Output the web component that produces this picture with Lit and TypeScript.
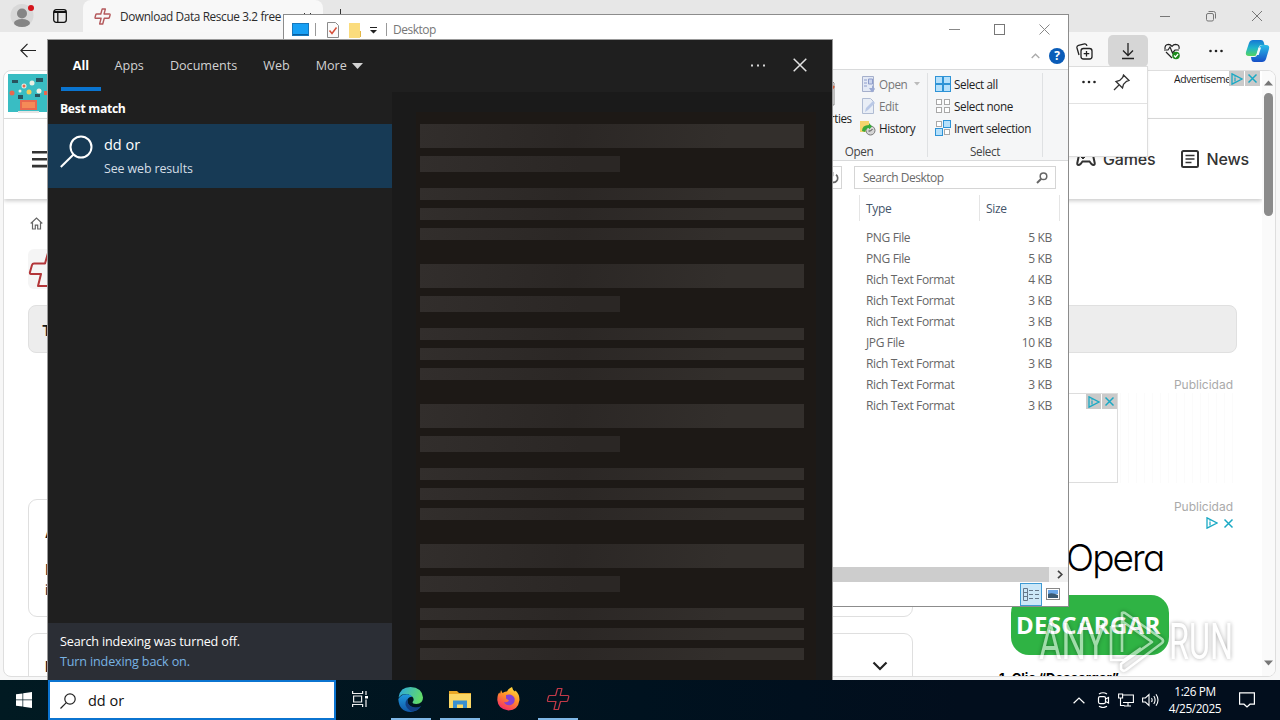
import { LitElement, html, css, svg } from "lit";
import { customElement } from "lit/decorators.js";

const rescueCross = svg`<path d="M11.500 1.500H16l-1.800 7h7.500q1.300 0 1 1.300l-1 3.700q-.3 1-1.300 1h-5.900l-2.200 8H8l2-8H2.500q-1.300 0-1-1.300l1-3.700q.3-1 1.300-1h5.800z" fill="none" stroke-linejoin="round"/>`;
const adChoices = html`<svg width="12" height="12" viewBox="0 0 12 12" fill="none" stroke="#1aa9c4" stroke-width="1.300"><path d="M1 .8v10.400L11 6z"/><path d="M4 4.500v4M4 3v.8" stroke-width="1.200"/></svg>`;
const adClose = html`<svg width="11" height="11" viewBox="0 0 11 11" stroke="#1aa9c4" stroke-width="1.500"><path d="M1.500 1.500l8 8M9.500 1.500l-8 8"/></svg>`;

@customElement("edge-window")
class EdgeWindow extends LitElement {
  static styles = css`
    :host { display: flex; flex-direction: column; width: 1280px; height: 680px; background: #f7f7f7; box-sizing: border-box; font-family: "Open Sans", "Noto Sans", sans-serif; color: #1b1b1b; }
    * { box-sizing: border-box; }
    svg { display: block; flex: none; }
    .tabs { display: flex; height: 32px; background: #e7e7e7; padding-left: 10px; flex: none; }
    .avatar { margin-top: 3px; }
    .spaces { margin: 9px 0 0 18px; }
    .tab { display: flex; align-items: center; width: 240px; height: 32px; margin-left: 16px; padding-left: 11px; background: #f8f8f8; border-radius: 8px 8px 0 0; font-size: 11.800px; white-space: nowrap; }
    .tab-title { margin-left: 9px; width: 183px; color: #2b2b2b; letter-spacing: -.37px; }
    .plus { margin: 9px 0 0 12px; }
    .controls { display: flex; margin: 10px 17px 0 auto; gap: 34px; }
    .toolbar { display: flex; height: 38px; align-items: center; padding: 0 10px 0 20px; flex: none; }
    .actions { display: flex; margin-left: auto; align-items: center; height: 38px; }
    .down { width: 40px; height: 32px; background: #d6d6d6; border-radius: 5px; display: grid; place-items: center; margin: 0 15px 0 15px; }
    .dots { margin: 0 22px 0 28px; }
    .frame { display: flex; width: 1273px; height: 607px; margin-left: 3px; background: #fff; border: 1px solid #dedede; border-radius: 8px; overflow: hidden; }
    .page { width: 1258px; height: 606px; flex: none; overflow: hidden; }
    .scroll { flex: 1; background: #fafafa; display: flex; flex-direction: column; align-items: center; padding: 9px 0 10px; }
    .thumb { width: 9px; height: 123px; background: #8b8b8b; border-radius: 5px; margin: 7px 0 auto; }
    .banner { height: 48px; border-bottom: 1px solid #dcdcdc; display: flex; justify-content: space-between; padding: 2px 2px 0 4px; }
    .sponsor { display: flex; font: 10.400px/13px "Open Sans", sans-serif; letter-spacing: -.38px; }
    .sponsor-text { width: 55px; overflow: hidden; white-space: nowrap; }
    .badges { display: flex; gap: 1px; }
    .badge { width: 15px; height: 15px; background: #cacaca; display: grid; place-items: center; }
    .sponsor .badges { margin-top: -2px; }
    .header { height: 80px; display: flex; align-items: center; padding: 0 13px 0 28px; box-shadow: 0 2px 4px #0003; color: #333; font: 500 16px Inter, sans-serif; letter-spacing: -.15px; }
    .menu { display: flex; align-items: center; margin-left: auto; gap: 7px; }
    .menu .news { margin-left: 19px; }
    .crumbs { padding: 18px 0 0 26px; }
    .product { width: 40px; height: 40px; background: #f5f5f5; border-radius: 6px; margin: 19px 0 0 24px; }
    .headline { width: 1209px; height: 48px; border: 1px solid #e0e0e0; border-radius: 8px; background: #ededed; margin: 16px 0 0 24px; padding: 15px 13px; font: 700 15px/20px Inter, sans-serif; }
    .columns { display: flex; justify-content: space-between; padding: 24px 29px 0 24px; }
    .articles { width: 885px; padding-top: 122px; display: flex; flex-direction: column; gap: 16px; }
    .card { height: 118px; border: 1px solid #dfdfdf; border-radius: 9px; padding: 23px 16px; font: 14px/20px Inter, sans-serif; }
    .card-title { font-weight: 700; line-height: 20px; margin-bottom: 17px; }
    .card.closed { display: flex; justify-content: space-between; padding-right: 24px; }
    .card.closed .chev { margin-top: 4px; }
    .side { display: flex; flex-direction: column; align-items: flex-end; width: 224px; }
    .label { font: 12px/16px Inter, sans-serif; color: #aaa; height: 16px; }
    .slot { width: 224px; height: 90px; display: flex; background: repeating-linear-gradient(90deg, #fff 0 7px, #fbfbfb 7px 8px); }
    .slot-ad { width: 109px; height: 90px; background: #fff; border: 1px solid #ddd; display: flex; justify-content: flex-end; }
    .label.second { margin-top: 16px; }
    .adrow { display: flex; gap: 5px; margin: 2px -1px 0 0; align-items: center; height: 12px; }
    .brand { align-self: flex-start; margin: 4px 0 0 57px; font: 300 37px/50px Inter, sans-serif; font-feature-settings: "cv11"; letter-spacing: -1.900px; color: #000; }
    .cta { align-self: flex-start; width: 158px; height: 60px; border-radius: 18px; background: #2fb344; color: #fff; font: 700 24px/60px "Open Sans", sans-serif; letter-spacing: .3px; padding-left: 5px; margin: 12px 0 0 2px; }
    .step { align-self: flex-start; margin: 13px 0 0 -10px; font: 700 13px/20px Inter, sans-serif; white-space: nowrap; color: #000; }
    .flyout { position: absolute; left: 900px; top: 66px; width: 248px; height: 91px; background: #fff; border: 1px solid #ddd; box-shadow: 0 2px 3px #0001; }
    .fly-head { height: 37px; border-bottom: 1px solid #e2e2e2; display: flex; align-items: center; justify-content: flex-end; gap: 17px; padding: 0 17px 6px; }
  `;
  render() {
    const ellipsis = html`<svg width="14" height="4" viewBox="0 0 14 4" fill="#222"><circle cx="1.500" cy="2" r="1.300"/><circle cx="7" cy="2" r="1.300"/><circle cx="12.500" cy="2" r="1.300"/></svg>`;
    return html`
      <div class="tabs">
        <svg class="avatar" width="25" height="25" viewBox="0 0 25 25"><circle cx="12" cy="12.500" r="11.500" fill="#d8d8d8"/><circle cx="12" cy="10.500" r="5" fill="#858585"/><ellipse cx="12" cy="20" rx="8" ry="4" fill="#858585"/><circle cx="21" cy="5" r="3" fill="#d5141c"/></svg>
        <svg class="spaces" width="14" height="14" viewBox="0 0 14 14" fill="none" stroke="#111" stroke-width="1.300"><rect x=".7" y=".7" width="12.600" height="12.600" rx="2.500"/><path d="M1 3h12" stroke-width="2"/><path d="M4.800 4v9"/></svg>
        <div class="tab">
          <svg width="17" height="17" viewBox="0 0 24 24" stroke="#b4595c" stroke-width="2">${rescueCross}</svg>
          <div class="tab-title">Download Data Rescue 3.2 free</div>
          <svg width="9" height="9" viewBox="0 0 9 9" stroke="#333"><path d="M1 1l7 7M8 1L1 8"/></svg>
        </div>
        <svg class="plus" width="12" height="12" viewBox="0 0 12 12" stroke="#333"><path d="M5.500 0v11M0 5.500h11"/></svg>
        <div class="controls">
          <svg width="12" height="12" viewBox="0 0 12 12" stroke="#777"><path d="M1 6.500h10"/></svg>
          <svg width="12" height="12" viewBox="0 0 12 12" stroke="#777" fill="none"><rect x="1.500" y="3.500" width="7" height="7.500" rx="1.500"/><path d="M3.500 1.500h5q2 0 2 2v5"/></svg>
          <svg width="12" height="12" viewBox="0 0 12 12" stroke="#777"><path d="M1 1l10 10M11 1L1 11"/></svg>
        </div>
      </div>
      <div class="toolbar">
        <svg width="17" height="16" viewBox="0 0 17 16" stroke="#222" stroke-width="1.200" fill="none"><path d="M16 7.500H1M7.500 .8L.9 7.500l6.600 6.700"/></svg>
        <div class="actions">
          <svg width="17" height="17" viewBox="0 0 17 17" stroke="#222" stroke-width="1.300" fill="none"><path d="M3 12L1 5q-.5-2 1.500-2.600l6-1.500q2-.4 2.500 2"/><rect x="5" y="5.500" width="11" height="10.500" rx="2.500"/><path d="M10.500 8v5.500M7.700 10.700h5.600"/></svg>
          <div class="down"><svg width="14" height="18" viewBox="0 0 14 18" stroke="#222" stroke-width="1.300" fill="none"><path d="M7 1v12M2 8.500l5 5 5-5M1 16.500h12"/></svg></div>
          <svg width="18" height="17" viewBox="0 0 18 17" stroke="#222" stroke-width="1.200" fill="none"><path d="M2 6q-.5-4.500 3.500-4.700 2 0 3.500 2 1.500-2 3.500-2Q17 1.500 16 6M3 9l6 6M1 7h4l2-3 2.500 6L12 7h4"/><circle cx="13" cy="12.500" r="3.800" fill="#1d8a1d" stroke="none"/><path d="M11 12.500l1.500 1.500 2.600-3" stroke="#fff"/></svg>
          <div class="dots">${ellipsis}</div>
          <svg width="25" height="24" viewBox="0 0 25 24"><defs><linearGradient id="cpA" x1="0" y1="0" x2="0" y2="1"><stop offset="0" stop-color="#1577d5"/><stop offset=".5" stop-color="#20b5cb"/><stop offset="1" stop-color="#55d45e"/></linearGradient><linearGradient id="cpB" x1="0" y1="0" x2="0" y2="1"><stop offset="0" stop-color="#29bde8"/><stop offset="1" stop-color="#164fc7"/></linearGradient></defs><path d="M8 1h8q2 0 2.700 2l.8 3h-3q-2 0-2.600 2l-2 7q-.6 2-2.600 2H4q-4 0-3-4L4 4q1-3 4-3z" fill="url(#cpA)"/><path d="M18 6h3q4 0 3 4l-3 10q-1 3-4 3H9q-2 0-2.500-2L6 18h3.500q2 0 2.600-2l2.300-8Q15 6 18 6z" fill="url(#cpB)"/><path d="M13.500 8.500h2.500l-2.300 7.500h-2.500z" fill="#f4f8fb"/></svg>
        </div>
      </div>
      <div class="frame">
        <div class="page">
          <div class="banner">
            <svg width="60" height="41" viewBox="0 0 60 41"><rect y="1" width="60" height="38" fill="#39bdc3"/><g transform="translate(0 1)"><g fill="#28545f"><path d="M4 6h6v3H4zM28 4h7v4h-7zM10 21h5v4h-5zM27 20h5v3h-5z"/></g><g fill="#e9efe4"><circle cx="16" cy="12" r="2.500"/><circle cx="24" cy="9" r="2.500"/><circle cx="31" cy="17" r="2.500"/><circle cx="12" cy="17" r="1.500"/></g><g fill="#e8674f"><circle cx="4" cy="19" r="2.500"/><circle cx="16" cy="12" r="1.500"/><path d="M12 26h17v10H12z"/><path d="M36 17h4v4h-4z"/></g><circle cx="21" cy="18" r="2.500" fill="#f0ce5c"/><path d="M14 28h13v6H14z" fill="#f58a57"/><path d="M10 37h21v2H10z" fill="#e4e4e4"/></g></svg>
            <div class="sponsor"><div class="sponsor-text">Advertisement</div><div class="badges"><span class="badge">${adChoices}</span><span class="badge">${adClose}</span></div></div>
          </div>
          <div class="header">
            <svg width="24" height="18" viewBox="0 0 24 18" fill="#333"><path d="M0 1h24v2.600H0zM0 8h24v2.600H0zM0 14.800h24v2.600H0z"/></svg>
            <div class="menu">
              <svg width="20" height="16" viewBox="0 0 20 16" fill="none" stroke="#333" stroke-width="2"><path d="M5 2h10q1.500 0 2 2l1.700 8q.3 2-1.200 2-1 0-2-1l-2-2.500h-7L4.500 13q-1 1-2 1Q1 14 1.300 12L3 4q.5-2 2-2zM7 4v4M5 6h4"/></svg>
              <span>Games</span>
              <svg class="news" width="18" height="18" viewBox="0 0 18 18" fill="none" stroke="#333" stroke-width="2"><rect x="1" y="1" width="16" height="16" rx="1.500"/><path d="M4.500 5.500h9M4.500 9h9M4.500 12.500h6" stroke-width="1.700"/></svg>
              <span>News</span>
            </div>
          </div>
          <div class="crumbs"><svg width="13" height="13" viewBox="0 0 13 13" fill="none" stroke="#666" stroke-width="1.200"><path d="M.7 6.500L6.500 1l5.800 5.500M2.500 5.500v6.500h2.800V8.200h2.400V12h2.800V5.500"/></svg></div>
          <div class="product"><svg width="40" height="40" viewBox="0 0 40 40" stroke="#b23538" stroke-width="2" fill="none" stroke-linejoin="round"><path d="M20 4h9l-3 11h12l-4 10h-9l-4 12H10l3-12H3q-1.500 0-1-2l2-7q.5-1.500 2-1.500h11z"/></svg></div>
          <div class="headline">T</div>
          <div class="columns">
            <div class="articles">
              <div class="card"><div class="card-title">A</div>D<br/>i</div>
              <div class="card closed"><b>D</b><svg class="chev" width="16" height="10" viewBox="0 0 16 10" fill="none" stroke="#222" stroke-width="2.200"><path d="M1.500 1.500L8 8l6.500-6.500"/></svg></div>
            </div>
            <div class="side">
              <div class="label">Publicidad</div>
              <div class="slot"><div class="slot-ad"><div class="badges"><span class="badge">${adChoices}</span><span class="badge">${adClose}</span></div></div></div>
              <div class="label second">Publicidad</div>
              <div class="adrow">${adChoices}${adClose}</div>
              <div class="brand">Opera</div>
              <div class="cta">DESCARGAR</div>
              <div class="step">1. Clic “Descargar”</div>
            </div>
          </div>
        </div>
        <div class="scroll">
          <svg width="9" height="6" viewBox="0 0 9 6" fill="#777"><path d="M0 5.500L4.500.5 9 5.500z"/></svg>
          <div class="thumb"></div>
          <svg width="9" height="6" viewBox="0 0 9 6" fill="#777"><path d="M0 .5L4.500 5.500 9 .5z"/></svg>
        </div>
      </div>
      <div class="flyout"><div class="fly-head">${ellipsis}<svg width="17" height="17" viewBox="0 0 17 17" fill="none" stroke="#333" stroke-width="1.300"><path d="M10.500 1l5.500 5.500-2.500.8-3 3L9.500 14 3 7.500l3.700-1 3-3zM6 11L1 16"/></svg></div></div>
    `;
  }
}

@customElement("file-explorer")
class FileExplorer extends LitElement {
  static styles = css`
    :host { display: flex; flex-direction: column; width: 786px; height: 593px; background: #fff; border: 1px solid #8c8c8c; box-sizing: border-box; font: 12px/16px "Open Sans", "Noto Sans", sans-serif; color: #1e1e1e; letter-spacing: -.36px; }
    * { box-sizing: border-box; }
    svg { display: block; flex: none; }
    .title { height: 29px; display: flex; align-items: center; padding-left: 8px; color: #777; flex: none; }
    .name { letter-spacing: -.5px; }
    .bar { width: 1px; height: 13px; background: #999; }
    .bar.a { margin: 0 10px 0 6px; }
    .bar.b { margin: 0 6px 0 8px; }
    .folder { margin-left: 8px; }
    .caret { margin-left: 7px; }
    .drop { margin-left: 4px; }
    .controls { display: flex; gap: 34px; margin: 0 18px 0 auto; }
    .tabs { height: 25px; display: flex; justify-content: flex-end; align-items: center; gap: 9px; padding: 0 3px 2px 0; flex: none; }
    .ribbon { height: 92px; background: #f5f6f7; border: solid #d9dadb; border-width: 1px 0; display: flex; justify-content: flex-end; padding-right: 25px; flex: none; letter-spacing: -.4px; font-size: 11.700px; }
    .group { display: flex; flex-direction: column; justify-content: space-between; border-right: 1px solid #dfe1e3; margin: 3px 0; }
    .open { width: 137px; }
    .select { width: 115px; }
    .cmds { display: flex; }
    .props { display: flex; flex-direction: column; align-items: center; width: 69px; padding-top: 5px; gap: 4px; }
    .line { height: 22px; display: flex; align-items: center; gap: 3px; white-space: nowrap; }
    .dim { color: #777; }
    .select .cmds { padding-left: 7px; }
    .cap { text-align: center; color: #444; margin-bottom: -2px; }
    .address { height: 34px; display: flex; justify-content: flex-end; gap: 12px; padding: 5px 12px 0 0; flex: none; }
    .path { width: 540px; height: 23px; border: 1px solid #d5d5d5; display: flex; align-items: center; justify-content: flex-end; padding-right: 2px; }
    .find { width: 202px; height: 23px; border: 1px solid #d5d5d5; display: flex; align-items: center; justify-content: space-between; padding: 1px 7px 0 8px; color: #6a6a6a; letter-spacing: -.48px; }
    .cols { display: grid; grid-template-columns: 1fr 120px 80px; height: 26px; padding-right: 8px; color: #44546a; flex: none; letter-spacing: -.36px; }
    .cols span { border-right: 1px solid #e5e5e5; padding: 6px 0 0 6px; }
    .files { flex: 1; padding-top: 6px; color: #666; }
    .file { display: grid; grid-template-columns: 1fr 120px 66px; padding-right: 16px; height: 21px; line-height: 21px; }
    .type { white-space: nowrap; }
    .size { text-align: right; }
    .hscroll { height: 15px; background: #f0f0f0; display: flex; justify-content: space-between; align-items: center; padding-right: 5px; flex: none; }
    .hthumb { width: 765px; height: 15px; background: #cdcdcd; }
    .status { height: 24px; display: flex; justify-content: flex-end; gap: 4px; padding-right: 8px; align-items: center; flex: none; }
    .view { width: 22px; height: 23px; border: 1px solid #3f9bd4; background: #cce8f8; display: grid; place-items: center; }
  `;
  private files = [
    ["PNG File", "5 KB"], ["PNG File", "5 KB"], ["Rich Text Format", "4 KB"], ["Rich Text Format", "3 KB"], ["Rich Text Format", "3 KB"],
    ["JPG File", "10 KB"], ["Rich Text Format", "3 KB"], ["Rich Text Format", "3 KB"], ["Rich Text Format", "3 KB"],
  ];
  private quad(fills: string[], stroke: string[]) {
    return html`<svg width="16" height="16" viewBox="0 0 16 16">${[0, 1, 2, 3].map((i) => {
      const big = fills[i] !== "none";
      const x = (i % 2) * 8 + (big ? 0.5 : 1.5), y = (i >> 1) * 8 + (big ? 0.5 : 1.5), s = big ? 7 : 5;
      return svg`<rect x=${x} y=${y} width=${s} height=${s} fill=${big ? fills[i] : "#fff"} stroke=${stroke[i]}/>`;
    })}</svg>`;
  }
  render() {
    const b = "#b5e0fb", n = "none", k = "#2e93d6", g = "#a8a8a8";
    return html`
      <div class="title">
        <svg width="17" height="13" viewBox="0 0 17 13"><rect x=".5" y=".5" width="16" height="12" fill="#18a0f4" stroke="#1678bd"/><path d="M1 11.500h15" stroke="#0b5fa0"/></svg>
        <div class="bar a"></div>
        <svg width="14" height="16" viewBox="0 0 14 16"><path d="M1.500.5h8l3 3v12h-11z" fill="#fbfbfb" stroke="#8b8b8b"/><path d="M3.500 8.500l2.500 3 4.500-6" fill="none" stroke="#d6503a" stroke-width="1.500"/></svg>
        <svg class="folder" width="14" height="16" viewBox="0 0 14 16"><path d="M1 1h11v15H1z" fill="#fbdc7d"/><path d="M12 9h1v6h-1z" fill="#e3b746"/></svg>
        <svg class="caret" width="9" height="8" viewBox="0 0 9 8" fill="#222"><path d="M1 1h7v1H1zM1 4h7L4.500 7.500z"/></svg>
        <div class="bar b"></div>
        <span class="name">Desktop</span>
        <div class="controls">
          <svg width="11" height="11" viewBox="0 0 11 11" stroke="#888"><path d="M0 5.500h11"/></svg>
          <svg width="11" height="11" viewBox="0 0 11 11" stroke="#777" fill="none"><rect x=".5" y=".5" width="10" height="10"/></svg>
          <svg width="11" height="11" viewBox="0 0 11 11" stroke="#888"><path d="M.5.5l10 10M10.500.5l-10 10"/></svg>
        </div>
      </div>
      <div class="tabs">
        <svg width="9" height="6" viewBox="0 0 9 6" fill="none" stroke="#aaa" stroke-width="1.300"><path d="M.7 5l3.800-3.800L8.300 5"/></svg>
        <svg width="16" height="16" viewBox="0 0 16 16"><circle cx="8" cy="8" r="8" fill="#0a5cb8"/><text x="8" y="12.300" text-anchor="middle" font-family="Open Sans" font-weight="700" font-size="12" fill="#fff">?</text></svg>
      </div>
      <div class="ribbon">
        <div class="group open">
          <div class="cmds">
            <div class="props"><svg width="21" height="28" viewBox="0 0 21 28"><path d="M1 1h14l4 4v22H1z" fill="#fff" stroke="#888"/><path d="M10 12l3 4 6-8" stroke="#d6603f" stroke-width="2.500" fill="none"/></svg><span>Properties</span></div>
            <div>
              <div class="line dim"><svg width="16" height="17" viewBox="0 0 16 17"><g transform="translate(1)"><path d="M1.500.5h11v15h-11z" fill="#e3e9f5" stroke="#a5afcb"/><path d="M3 4h3M3 7h3M3 10h3M7.500 3h4v5h-4z" stroke="#8d9ccb" fill="#c9d3ec"/><path d="M8 12h3V9l3 4-3 3.500z" fill="#9aa9d3"/></g></svg><span>Open</span><svg class="drop" width="6" height="4" viewBox="0 0 6 4" fill="#bbb"><path d="M0 0h6L3 3.500z"/></svg></div>
              <div class="line dim"><svg width="16" height="16" viewBox="0 0 16 16"><g transform="translate(1)"><path d="M1.500.5h8l3 3v12h-11z" fill="#e9eef6" stroke="#b0bcd3"/><path d="M4 14l1-4 7-7 2 2-7 7z" fill="#b9c8e6"/></g></svg><span>Edit</span></div>
              <div class="line"><svg width="16" height="16" viewBox="0 0 16 16"><path d="M0 1h9v11H0z" fill="#f5d46d"/><circle cx="10.500" cy="10.500" r="4.500" fill="#d5d5d5" stroke="#777"/><path d="M2 11q0-6 7-6V3l3 3.500-3 3V8q-3 0-4 4z" fill="#3aaa3c"/><path d="M10.500 11l2-2M10.500 11h-2" stroke="#444"/></svg><span>History</span></div>
            </div>
          </div>
          <div class="cap">Open</div>
        </div>
        <div class="group select">
          <div class="cmds"><div>
            <div class="line">${this.quad([b, b, b, b], [k, k, k, k])}<span>Select all</span></div>
            <div class="line">${this.quad([n, n, n, n], [g, g, g, g])}<span>Select none</span></div>
            <div class="line">${this.quad([n, b, b, n], [g, k, k, g])}<span>Invert selection</span></div>
          </div></div>
          <div class="cap">Select</div>
        </div>
      </div>
      <div class="address">
        <div class="path"><svg width="11" height="12" viewBox="0 0 11 12" fill="none" stroke="#666" stroke-width="1.700"><path d="M3.500 2.500A4.200 4.200 0 1 0 8 2.800M4.500 0v3.500H1"/></svg></div>
        <div class="find"><span>Search Desktop</span><svg width="12" height="12" viewBox="0 0 12 12" fill="none" stroke="#666" stroke-width="1.500"><circle cx="7.500" cy="4.300" r="3.300"/><path d="M5 7L1 11" stroke-width="2"/></svg></div>
      </div>
      <div class="cols"><span></span><span>Type</span><span>Size</span></div>
      <div class="files">${this.files.map(([t, s]) => html`<div class="file"><span></span><span class="type">${t}</span><span class="size">${s}</span></div>`)}</div>
      <div class="hscroll"><div class="hthumb"></div><svg width="6" height="9" viewBox="0 0 6 9" fill="none" stroke="#444" stroke-width="1.700"><path d="M1 .8l3.800 3.700L1 8.200"/></svg></div>
      <div class="status">
        <div class="view"><svg width="17" height="13" viewBox="0 0 17 13" fill="none" stroke="#66788a"><path d="M.5.500h4v12h-4zM.5 4.500h4M.5 8.500h4M6 2.500h4M12 2.500h4M6 6.500h4M12 6.500h4M6 10.500h4M12 10.500h4"/></svg></div>
        <svg width="14" height="12" viewBox="0 0 14 12"><rect x=".5" y=".5" width="13" height="11" fill="#fff" stroke="#888"/><path d="M2 2h10v4H2z" fill="#6aa7e8"/><path d="M2 6q4-2 10 1v3H2z" fill="#3a5a73"/></svg>
      </div>
    `;
  }
}

@customElement("search-panel")
class SearchPanel extends LitElement {
  static styles = css`
    :host { display: flex; flex-direction: column; width: 784px; height: 640px; background: #1f1f1f; color: #fff; font: 12.600px/18px "Open Sans", "Noto Sans", sans-serif; outline: 1px solid #999; box-sizing: border-box; }
    * { box-sizing: border-box; }
    svg { display: block; flex: none; }
    .head { height: 52px; display: flex; align-items: flex-start; flex: none; color: #d2d2d2; padding-left: 13px; }
    .scope { padding: 17px 0 0; margin-right: 26px; height: 51px; }
    .scope.active { font-weight: 700; color: #fff; width: 40px; text-align: center; border-bottom: 4px solid #0a74cf; margin-right: 13.500px; }
    .scope.more { display: flex; gap: 5px; }
    .scope.more svg { margin-top: 6px; }
    .tools { display: flex; align-items: center; margin: 18px 25px 0 auto; gap: 27px; }
    .main { display: flex; flex: 1; }
    .results { width: 344px; display: flex; flex-direction: column; }
    .section { height: 32px; padding: 9px 12px; font-weight: 700; font-size: 12.200px; line-height: 16px; letter-spacing: -.33px; }
    .hit { height: 64px; background: #173a55; display: flex; gap: 11px; padding: 11px 12px; }
    .hit-name { font-size: 14.500px; line-height: 20px; }
    .hit-sub { font-size: 12.400px; line-height: 18px; margin-top: 5px; color: #d5dee6; letter-spacing: -.1px; }
    .notice { height: 57px; background: #2b2e35; margin-top: auto; padding: 9px 12px; line-height: 20px; font-size: 12.600px; letter-spacing: -.16px; white-space: nowrap; }
    .link { color: #78b3e3; }
    .preview { flex: 1; background: #1a1a1a; padding: 20px 16px 0 24px; }
    .bones { height: 568px; background: #1d1916; padding: 12px 12px 0 4px; }
    .bone { background: linear-gradient(100deg, #322e2c 0%, #2b2725 40%, #332f2c 80%); width: 384px; height: 12px; margin-bottom: 8px; }
    .big { height: 24px; }
    .mid { background: linear-gradient(100deg, #322e2c 0%, #2b2725 80%); width: 200px; height: 16px; margin-bottom: 16px; }
    .last { margin-bottom: 24px; }
  `;
  render() {
    return html`
      <div class="head">
        <div class="scope active">All</div>
        <div class="scope">Apps</div><div class="scope">Documents</div><div class="scope">Web</div>
        <div class="scope more">More<svg width="11" height="6" viewBox="0 0 11 6" fill="#d2d2d2"><path d="M0 0h11L5.500 6z"/></svg></div>
        <div class="tools">
          <svg width="16" height="3" viewBox="0 0 16 3" fill="#d6d6d6"><path d="M1 .5h2v2H1zM7 .5h2v2H7zM13 .5h2v2h-2z"/></svg>
          <svg width="14" height="14" viewBox="0 0 14 14" stroke="#e2e2e2" stroke-width="1.500"><path d="M.7.7l12.600 12.600M13.300.7L.7 13.300"/></svg>
        </div>
      </div>
      <div class="main">
        <div class="results">
          <div class="section">Best match</div>
          <div class="hit">
            <svg width="33" height="33" viewBox="0 0 33 33" fill="none" stroke="#fff" stroke-width="2"><circle cx="21" cy="12" r="10.500"/><path d="M13.500 19.500L.8 32"/></svg>
            <div><div class="hit-name">dd or</div><div class="hit-sub">See web results</div></div>
          </div>
          <div class="notice"><div>Search indexing was turned off.</div><div class="link">Turn indexing back on.</div></div>
        </div>
        <div class="preview"><div class="bones">
          ${[0, 1, 2, 3].map(() => html`<div class="bone big"></div><div class="bone mid"></div><div class="bone"></div><div class="bone"></div><div class="bone last"></div>`)}
        </div></div>
      </div>
    `;
  }
}

@customElement("task-bar")
class TaskBar extends LitElement {
  static styles = css`
    :host { display: flex; width: 1280px; height: 40px; background: linear-gradient(90deg, #011a22, #00121f 50%, #020e1d 75%); color: #fff; font: 12px/18px "Open Sans", "Noto Sans", sans-serif; }
    * { box-sizing: border-box; }
    svg { display: block; flex: none; }
    .start { width: 48px; display: grid; place-items: center; }
    .query { width: 288px; border: 2px solid #0b74d0; background: #fff; color: #111; display: flex; align-items: center; padding: 1px 0 0 10px; gap: 12px; font-size: 14.500px; }
    .app { width: 49px; height: 40px; display: grid; grid-template-rows: 38px 2px; justify-items: center; align-items: center; }
    .app.view { width: 48px; margin-right: 2px; }
    .mark { width: 40px; height: 2px; background: #7fb7e6; }
    .tray { margin-left: auto; display: flex; align-items: center; padding-right: 25px; }
    .clock { text-align: center; width: 56px; margin-right: 16px; font-size: 11.800px; line-height: 17px; padding-bottom: 1px; letter-spacing: -.38px; white-space: nowrap; }
    .ico { margin-right: 8px; }
    .more { margin-right: 12px; }
  `;
  render() {
    return html`
      <div class="start"><svg width="16" height="16" viewBox="0 0 16 16" fill="#fff"><path d="M0 2.300L6.500 1.400v6.200H0zM7.200 1.300L16 0v7.600H7.200zM0 8.300h6.500v6.300L0 13.700zM7.200 8.300H16V16l-8.800-1.300z"/></svg></div>
      <div class="query"><svg width="16" height="16" viewBox="0 0 16 16" fill="none" stroke="#222" stroke-width="1.200"><circle cx="10" cy="6" r="5.200"/><path d="M6.300 9.700L.5 15.500"/></svg><span>dd or</span></div>
      <div class="app view"><svg width="16" height="16" viewBox="0 0 16 16" fill="none" stroke="#eee" stroke-width="1.200"><path d="M.6 0v2.500h10V0M.6 16v-2.500h10V16M1.600 5h8v6h-8zM14 0v4M14 8.500V16"/><path d="M13 5h3v2.500h-3z" fill="#fff" stroke="none"/></svg></div>
      <div class="app"><svg width="25" height="25" viewBox="0 0 24 24"><defs><linearGradient id="e1" x1="0" y1="0" x2="1" y2=".3"><stop offset="0" stop-color="#2aa6e3"/><stop offset="1" stop-color="#61da6b"/></linearGradient><linearGradient id="e2" x1="0" y1="0" x2="0" y2="1"><stop offset="0" stop-color="#1f98dd"/><stop offset="1" stop-color="#1158a8"/></linearGradient></defs><path d="M.5 10Q2 0 12 0q11 .5 12 10 0 6-6.500 6.300-4 0-3.500-1.800 2.300-3-.5-5.500Q6 4 .5 10z" fill="url(#e1)"/><path d="M.3 11.500Q3 6.500 9 7q3.500.3 4.800 2.300-3.500-.3-4.800 3-.5 6 6 7.500 4 .8 7-1.300Q18 24 12 24 1 23.500.3 11.500z" fill="url(#e2)"/><path d="M9 11q-5 7 3 12 7 1 10-4.500-4 2-8.500.5Q8.500 17 9 11z" fill="#123f85"/></svg><div class="mark"></div></div>
      <div class="app"><svg width="22" height="19" viewBox="0 0 22 19"><path d="M0 1h8l2 2h12v15H0z" fill="#e9a826"/><path d="M0 4h22v14H0z" fill="#fbd765"/><path d="M4 10.500h14V18h-4v-3.500H8V18H4z" fill="#3a8fd0"/></svg><div class="mark"></div></div>
      <div class="app"><svg width="23" height="24" viewBox="0 0 23 24"><defs><linearGradient id="f" x1=".8" y1="0" x2=".3" y2="1"><stop offset="0" stop-color="#ffe23f"/><stop offset=".45" stop-color="#ff9127"/><stop offset="1" stop-color="#f6286b"/></linearGradient></defs><path d="M4 3l1.500 3Q8 4 10 4.500 11.500 1.500 15 0q.5 3 3 4.500l.5-1Q22.500 7 22.500 13 21 23.500 11.500 23.500 1 22.500.3 13 .3 7 2.500 5.500L3 7z" fill="url(#f)"/><path d="M9 8q6-2 8.500 3 1 5-3.500 7-5 1-7-3 4 1 5-1.500L9 11.500z" fill="#8541d3"/></svg></div>
      <div class="app"><svg width="24" height="24" viewBox="0 0 24 24" stroke="#c23a48" stroke-width="1.200">${rescueCross}</svg><div class="mark"></div></div>
      <div class="tray">
        <svg class="more" width="12" height="7" viewBox="0 0 12 7" fill="none" stroke="#fff" stroke-width="1.200"><path d="M.6 6.300L6 1l5.400 5.300"/></svg>
        <svg class="ico" width="13" height="16" viewBox="0 0 13 16" fill="none" stroke="#fff" stroke-width="1.200"><rect x="1.500" y="4.600" width="7" height="7" rx="1.500"/><path d="M8.500 7l3-1.500v5.500L8.500 9.500M2 2q4-2.500 8 0M2 14.300q4 2.400 8 0"/></svg>
        <svg class="ico" width="16" height="14" viewBox="0 0 16 14" fill="none" stroke="#fff" stroke-width="1.100"><path d="M5 2h10.400v7.500H5M10 9.500v3M6 13h7M.6 1h4v4h-4zM2.500 5v7.500h4"/></svg>
        <svg class="ico" width="17" height="14" viewBox="0 0 17 14" fill="none" stroke="#fff" stroke-width="1.100"><path d="M.6 5v4h2.800L7 12.500v-11L3.400 5zM9.500 5q1.300 2 0 4M11.800 3q2.600 4 0 8M14 1.300q4 5.700 0 11.400"/></svg>
        <div class="clock">1:26 PM<br/>4/25/2025</div>
        <svg width="16" height="16" viewBox="0 0 16 16" fill="none" stroke="#fff" stroke-width="1.200"><path d="M.6.8h14.800v11.400H11L8 15l-3-2.800H.6z"/></svg>
      </div>
    `;
  }
}

@customElement("app-root")
class AppRoot extends LitElement {
  static styles = css`
    :host { display: block; width: 1280px; height: 720px; }
    .desktop { position: relative; width: 1280px; height: 720px; overflow: hidden; background: #f7f7f7; }
    .edge, .files, .search, .tasks, .stamp { position: absolute; }
    .edge { left: 0; top: 0; }
    .files { left: 283px; top: 14px; }
    .search { left: 48px; top: 40px; }
    .tasks { left: 0; top: 680px; }
    .stamp { left: 1032px; top: 604px; filter: drop-shadow(0 0 2px #0009); opacity: .55; }
  `;
  render() {
    return html`
      <div class="desktop">
        <edge-window class="edge"></edge-window>
        <file-explorer class="files"></file-explorer>
        <search-panel class="search"></search-panel>
        <svg class="stamp" width="206" height="74" viewBox="0 0 206 74" fill="#fff">
          <g font-family="Roboto" font-weight="400" font-size="50"><text x="7" y="55" textLength="67" lengthAdjust="spacingAndGlyphs">ANY</text><text x="137" y="55" textLength="64" lengthAdjust="spacingAndGlyphs">RUN</text></g>
          <path d="M90 21V9q1-1 3 0l37 26q2 2 0 4L94 66q-3 2-5-1v-5l31-22-30-21M90 21v27M79 22v34h13l17-12M79 22h11" fill="none" stroke="#fff" stroke-width="2.600" stroke-linejoin="round"/>
        </svg>
        <task-bar class="tasks"></task-bar>
      </div>
    `;
  }
}
